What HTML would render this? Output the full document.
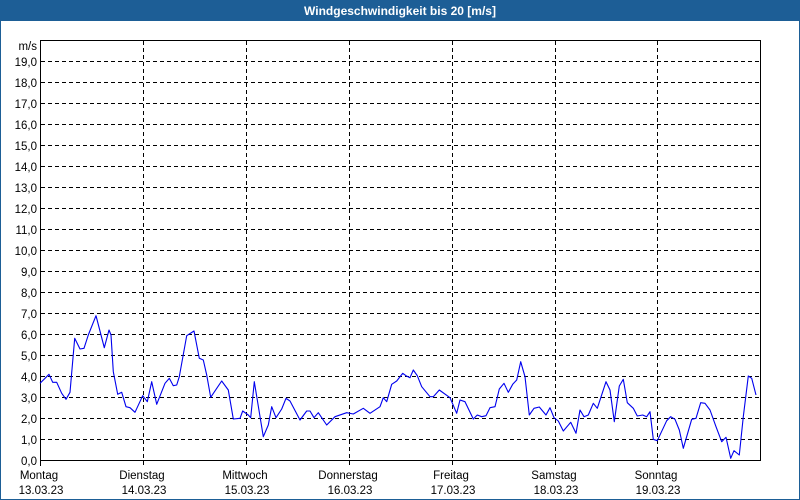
<!DOCTYPE html>
<html><head><meta charset="utf-8"><style>
html,body{margin:0;padding:0;background:#fff;}
svg{display:block;font-family:"Liberation Sans",Tahoma,sans-serif;}
</style></head><body>
<svg width="800" height="500" viewBox="0 0 800 500" xmlns="http://www.w3.org/2000/svg">
<rect x="0" y="0" width="800" height="500" fill="#fff"/>
<rect x="0" y="0" width="800" height="21" fill="#1d5e96"/>
<rect x="0" y="0" width="1" height="500" fill="#1d5e96"/>
<rect x="799" y="0" width="1" height="500" fill="#1d5e96"/>
<rect x="0" y="499" width="800" height="1" fill="#1d5e96"/>
<text x="400" y="15" fill="#fff" font-size="12" font-weight="bold" text-anchor="middle">Windgeschwindigkeit bis 20 [m/s]</text>
<g stroke="#000" stroke-width="1" stroke-dasharray="4,3" shape-rendering="crispEdges">
<line x1="41" y1="61.5" x2="760" y2="61.5"/><line x1="41" y1="82.5" x2="760" y2="82.5"/><line x1="41" y1="103.5" x2="760" y2="103.5"/><line x1="41" y1="124.5" x2="760" y2="124.5"/><line x1="41" y1="145.5" x2="760" y2="145.5"/><line x1="41" y1="166.5" x2="760" y2="166.5"/><line x1="41" y1="187.5" x2="760" y2="187.5"/><line x1="41" y1="208.5" x2="760" y2="208.5"/><line x1="41" y1="229.5" x2="760" y2="229.5"/><line x1="41" y1="250.5" x2="760" y2="250.5"/><line x1="41" y1="271.5" x2="760" y2="271.5"/><line x1="41" y1="292.5" x2="760" y2="292.5"/><line x1="41" y1="313.5" x2="760" y2="313.5"/><line x1="41" y1="334.5" x2="760" y2="334.5"/><line x1="41" y1="355.5" x2="760" y2="355.5"/><line x1="41" y1="376.5" x2="760" y2="376.5"/><line x1="41" y1="397.5" x2="760" y2="397.5"/><line x1="41" y1="418.5" x2="760" y2="418.5"/><line x1="41" y1="439.5" x2="760" y2="439.5"/>
<line x1="143.5" y1="41" x2="143.5" y2="466"/><line x1="246.5" y1="41" x2="246.5" y2="466"/><line x1="349.5" y1="41" x2="349.5" y2="466"/><line x1="452.5" y1="41" x2="452.5" y2="466"/><line x1="555.5" y1="41" x2="555.5" y2="466"/><line x1="657.5" y1="41" x2="657.5" y2="466"/>
</g>
<g stroke="#000" stroke-width="1" shape-rendering="crispEdges" fill="none">
<polyline points="40.5,40.5 760.5,40.5 760.5,460.5"/>
<line x1="40.5" y1="40" x2="40.5" y2="466"/>
<line x1="40" y1="460.5" x2="761" y2="460.5"/>
</g>
<polyline fill="none" stroke="#0000ee" stroke-width="1.1" stroke-linejoin="round" points="40,383.3 49,374.3 52.7,382.3 56.7,382.3 61.7,393.3 66,399.3 70,392.3 74.7,338.3 80,349 84,348.3 88.3,335 96,315.7 104.3,347.7 109,330 111,335 113.3,371.7 117.7,394.3 121.7,392.3 126,406.7 130,407.7 135,412.3 142.7,395.7 147.3,401.7 151.7,381.7 156.7,404.3 165,383.3 169.3,378.3 173.3,385.7 176.7,385 179.3,376.7 186.7,335.7 194,331 199.3,358.3 203.3,360 206.7,375 210.7,397.3 221.7,381 228.3,390 233.3,419 240,418.3 242.7,411 248.3,415 250.7,417.7 254.3,381.7 263.3,436.7 268.3,425 271.7,406.7 276,417.7 281.7,409 286,398.3 290,401 300,420 306.7,411 310,411 314,417.7 318.3,412.7 326.7,425 335,416.7 346.7,412.7 353.3,414 363.3,408.3 370,413.3 380,406.7 383.3,397.7 386.7,401.7 391.7,384.3 396.7,381 402.7,373.3 406,375.7 410,377.7 413.3,370 417.3,375.7 421.7,386.7 430,396.7 433.3,396.7 439.3,390 450,397.7 456.7,413.3 460,400 465,401.7 473.3,419 477.3,415 481.7,416.7 486,415.7 490,407.7 495,406.7 499.3,389 504,383.3 508.3,392.3 512.7,384.3 516.7,380 520.7,361.7 525,376.7 529.3,415 534,408.3 539.3,407 546,415 550,407.7 554,417.7 558.3,421 563.3,431 570.7,422.3 576,433.3 580,410 584,416.7 588.3,415 593.3,403.3 597.3,408.3 606,381.7 610,390 614.3,421.7 619.3,386 623.3,379.3 627.3,402.7 633.3,408.3 637.3,416 642.7,415 646.7,416.7 650,411.7 653.3,439.3 657.3,440.7 666.7,420.7 670.7,416.7 675,419.3 679.3,430 683.3,448.3 691.7,419.3 696,418.3 700.7,402.7 705,403.3 710,410 716,426.7 721.7,441.7 726,437.3 730.7,458.3 734,450.7 739.3,455 743.3,416.7 748.3,376 751.7,378.3 756,395"/>
<g font-size="11.5" fill="#000" text-anchor="end">
<text x="37" y="50">m/s</text>
<text x="37" y="66">19,0</text><text x="37" y="87">18,0</text><text x="37" y="108">17,0</text><text x="37" y="129">16,0</text><text x="37" y="150">15,0</text><text x="37" y="171">14,0</text><text x="37" y="192">13,0</text><text x="37" y="213">12,0</text><text x="37" y="234">11,0</text><text x="37" y="255">10,0</text><text x="37" y="276">9,0</text><text x="37" y="297">8,0</text><text x="37" y="318">7,0</text><text x="37" y="339">6,0</text><text x="37" y="360">5,0</text><text x="37" y="381">4,0</text><text x="37" y="402">3,0</text><text x="37" y="423">2,0</text><text x="37" y="444">1,0</text><text x="37" y="465">0,0</text>
</g>
<g font-size="11.5" fill="#000" text-anchor="middle">
<text x="39" y="479">Montag</text><text x="41" y="494">13.03.23</text>
<text x="142" y="479">Dienstag</text><text x="144" y="494">14.03.23</text>
<text x="245" y="479">Mittwoch</text><text x="247" y="494">15.03.23</text>
<text x="348" y="479">Donnerstag</text><text x="350" y="494">16.03.23</text>
<text x="451" y="479">Freitag</text><text x="453" y="494">17.03.23</text>
<text x="554" y="479">Samstag</text><text x="556" y="494">18.03.23</text>
<text x="656" y="479">Sonntag</text><text x="658" y="494">19.03.23</text>
</g>
</svg>
</body></html>
